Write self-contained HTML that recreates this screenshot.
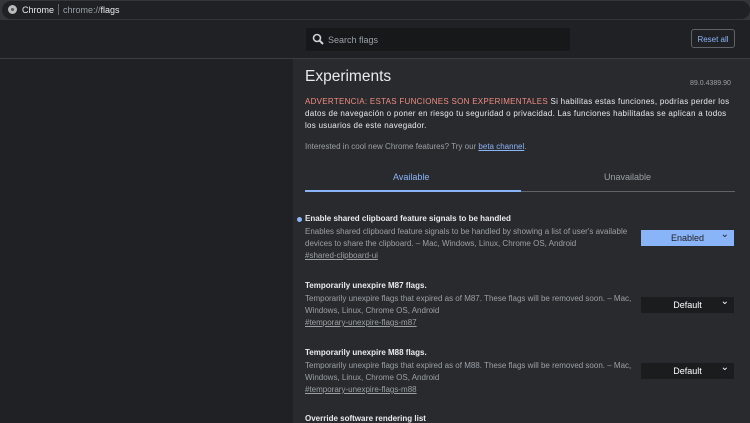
<!DOCTYPE html><html><head><style>
body{margin:0;width:750px;height:423px;overflow:hidden;background:#202124;font-family:"Liberation Sans",sans-serif;position:relative}
.a{position:absolute}
.top{left:0;top:0;width:750px;height:20px;background:#35363a}
.addr{left:2px;top:1px;width:748px;height:18px;background:#202124;border-radius:9px}
.hdr{left:0;top:20px;width:750px;height:38px;background:#202124;border-bottom:1px solid #3c3d40}
.main{left:293px;top:59px;width:457px;height:364px;background:#292a2d}
.t{color:#e8eaed;font-size:8px}
.d{color:#9aa0a6;font-size:8px;line-height:12px}
.l{color:#9aa0a6;font-size:8px;text-decoration:underline}
.sel{width:93px;height:16px;background:#1b1c1e;color:#fff;font-size:9px;line-height:16px;text-align:center}
.sel:after{content:"⌄";position:absolute;right:5px;top:-3px;font-size:10px}
</style></head><body>
<div class="a top"></div><div class="a addr"></div>
<div class="a" style="left:8px;top:5px;width:9px;height:9px;border-radius:50%;background:#bbb"></div>
<div class="a" style="left:11px;top:8px;width:3px;height:3px;border-radius:50%;background:#555"></div>
<div class="a" style="left:22px;top:5px;color:#e8eaed;font-size:9px">Chrome</div>
<div class="a" style="left:58px;top:4px;width:1px;height:11px;background:#666"></div>
<div class="a" style="left:63px;top:5px;color:#9aa0a6;font-size:9px">chrome://<span style="color:#e8eaed">flags</span></div>
<div class="a hdr"></div>
<div class="a" style="left:306px;top:28px;width:264px;height:23px;background:#17181a;border-radius:2px"></div>
<svg class="a" style="left:312px;top:33px" width="12" height="12"><circle cx="5" cy="5" r="3.5" stroke="#cfd1d4" stroke-width="1.6" fill="none"/><path d="M7.5 7.5L11 11" stroke="#cfd1d4" stroke-width="2"/></svg>
<div class="a" style="left:328px;top:35px;color:#9aa0a6;font-size:9px">Search flags</div>
<div class="a" style="left:691px;top:29px;width:44px;height:19px;border:1px solid #5f6368;border-radius:3px;color:#8ab4f8;font-size:8px;line-height:19px;text-align:center;box-sizing:border-box">Reset all</div>
<div class="a main"></div>
<div class="a" style="left:305px;top:68px;color:#e8eaed;font-size:15.5px">Experiments</div>
<div class="a" style="left:690px;top:80px;color:#9aa0a6;font-size:7px">89.0.4389.90</div>
<div class="a" style="left:305px;top:96px;width:430px;color:#e8eaed;font-size:8px;line-height:12px;letter-spacing:0.28px"><span style="color:#f28b82">ADVERTENCIA: ESTAS FUNCIONES SON EXPERIMENTALES</span> Si habilitas estas funciones, podrías perder los datos de navegación o poner en riesgo tu seguridad o privacidad. Las funciones habilitadas se aplican a todos los usuarios de este navegador.</div>
<div class="a" style="left:305px;top:142px;color:#9aa0a6;font-size:8px">Interested in cool new Chrome features? Try our <span style="color:#8ab4f8;text-decoration:underline">beta channel</span>.</div>
<div class="a" style="left:393px;top:172px;color:#8ab4f8;font-size:9px">Available</div>
<div class="a" style="left:604px;top:172px;color:#9aa0a6;font-size:9px">Unavailable</div>
<div class="a" style="left:305px;top:191px;width:430px;height:1px;background:#5f6368"></div>
<div class="a" style="left:305px;top:190px;width:216px;height:2px;background:#8ab4f8"></div>
<div class="a" style="left:297px;top:217px;width:5px;height:5px;border-radius:50%;background:#8ab4f8"></div>
<div class="a t" style="left:305px;top:214px;font-weight:bold">Enable shared clipboard feature signals to be handled</div>
<div class="a d" style="left:305px;top:226px;width:335px">Enables shared clipboard feature signals to be handled by showing a list of user's available devices to share the clipboard. – Mac, Windows, Linux, Chrome OS, Android</div>
<div class="a l" style="left:305px;top:251px">#shared-clipboard-ui</div>
<div class="a sel" style="left:641px;top:230px;background:#8ab4f8;color:#202124">Enabled</div>
<div class="a t" style="left:305px;top:281px;font-weight:bold">Temporarily unexpire M87 flags.</div>
<div class="a d" style="left:305px;top:293px;width:335px">Temporarily unexpire flags that expired as of M87. These flags will be removed soon. – Mac, Windows, Linux, Chrome OS, Android</div>
<div class="a l" style="left:305px;top:318px">#temporary-unexpire-flags-m87</div>
<div class="a sel" style="left:641px;top:297px">Default</div>
<div class="a t" style="left:305px;top:348px;font-weight:bold">Temporarily unexpire M88 flags.</div>
<div class="a d" style="left:305px;top:360px;width:335px">Temporarily unexpire flags that expired as of M88. These flags will be removed soon. – Mac, Windows, Linux, Chrome OS, Android</div>
<div class="a l" style="left:305px;top:385px">#temporary-unexpire-flags-m88</div>
<div class="a sel" style="left:641px;top:363px">Default</div>
<div class="a t" style="left:305px;top:414px;font-weight:bold">Override software rendering list</div>
</body></html>
